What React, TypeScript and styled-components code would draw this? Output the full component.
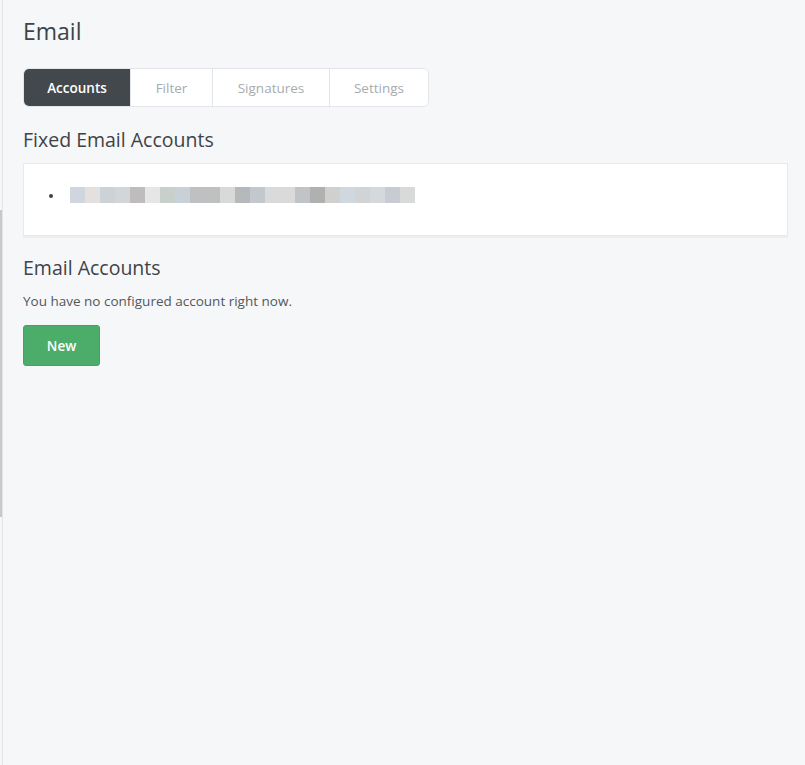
import styled, { createGlobalStyle } from "styled-components";

const GlobalStyle = createGlobalStyle`
  html, body {
    margin: 0;
    padding: 0;
    background: #f6f7f9;
  }
  body {
    font-family: "Open Sans", "Noto Sans", sans-serif;
    color: #3c4144;
  }
`;

const Page = styled.div`
  display: flex;
  min-height: 765px;
  background: #f6f7f9;
`;

const Edge = styled.div`
  width: 2px;
  border-right: 1px solid #e4e5e7;
  display: flex;
  flex-direction: column;
  padding-top: 210px;
`;

const EdgeThumb = styled.div`
  height: 307px;
  background: #c9c9c9;
`;

const Main = styled.main`
  flex: 1;
  padding: 14px 17px 0 20px;
`;

const Title = styled.h1`
  margin: 0 0 20px;
  font-size: 23px;
  font-weight: 400;
  line-height: 34px;
  color: #3e4347;
`;

const Tabs = styled.div`
  display: inline-flex;
  height: 39px;
  border: 1px solid #e3e5e8;
  border-radius: 6px;
  background: #fff;
  overflow: hidden;
  box-sizing: border-box;
`;

const Tab = styled.div<{ $active?: boolean; $w: number }>`
  width: ${(p) => p.$w}px;
  display: flex;
  align-items: center;
  justify-content: center;
  font-size: 13.5px;
  font-weight: ${(p) => (p.$active ? 600 : 400)};
  color: ${(p) => (p.$active ? "#ffffff" : "#a6abaf")};
  background: ${(p) => (p.$active ? "#43484c" : "#ffffff")};
  & + & {
    border-left: 1px solid #e3e5e8;
  }
`;

const Heading = styled.h2`
  margin: 0;
  font-size: 19.5px;
  font-weight: 400;
  line-height: 28px;
  color: #3e4347;
`;

const FixedHeading = styled(Heading)`
  margin-top: 19px;
  margin-bottom: 9px;
`;

const Panel = styled.div`
  background: #fff;
  border: 1px solid #e5eaea;
  box-shadow: 0 2px 0 #eceef0;
  padding: 23px 0 32px 0;
`;

const AccountList = styled.ul`
  margin: 0;
  padding-left: 40px;
  font-size: 14px;
  color: #3e4347;
`;

const AccountItem = styled.li`
  line-height: 16px;
  padding-left: 6px;
  &::marker {
    font-size: 12px;
  }
`;

const Pixels = styled.span`
  display: inline-flex;
  vertical-align: top;
  height: 16px;
`;

const Pixel = styled.span<{ $c: string }>`
  width: 15px;
  height: 16px;
  background: ${(p) => p.$c};
`;

const AccountsHeading = styled(Heading)`
  margin-top: 18px;
  margin-bottom: 9px;
`;

const Note = styled.p`
  margin: 0 0 14px;
  font-size: 13.5px;
  line-height: 20px;
  color: #51575b;
`;

const NewButton = styled.button`
  width: 77px;
  height: 41px;
  border: 1px solid #46a463;
  border-radius: 3px;
  background: #4cac6a;
  color: #fff;
  font-family: inherit;
  font-size: 13.5px;
  font-weight: 600;
  cursor: pointer;
`;

const blurred = [
  "#cfd6dd", "#e3e0de", "#cdd2d6", "#d3d6d9", "#bebcbd", "#e6e6e6",
  "#c9cfcb", "#c9d1d8", "#bfc0c1", "#bfc1c1", "#d8d9d9", "#b5b9bc",
  "#c2c8cd", "#d9dad9", "#d9dad9", "#c0c4c7", "#afb0b0", "#d0d0cf",
  "#cfd8df", "#d2d3d4", "#d6d9dc", "#c8cbd3", "#d8d9d9",
];

const tabs = [
  { label: "Accounts", width: 106, active: true },
  { label: "Filter", width: 81 },
  { label: "Signatures", width: 116 },
  { label: "Settings", width: 98 },
];

export default function App() {
  return (
    <Page>
      <GlobalStyle />
      <Edge>
        <EdgeThumb />
      </Edge>
      <Main>
        <Title>Email</Title>
        <Tabs>
          {tabs.map((t) => (
            <Tab key={t.label} $active={t.active} $w={t.width}>
              {t.label}
            </Tab>
          ))}
        </Tabs>

        <FixedHeading>Fixed Email Accounts</FixedHeading>
        <Panel>
          <AccountList>
            <AccountItem>
              <Pixels>
                {blurred.map((c, i) => (
                  <Pixel key={i} $c={c} />
                ))}
              </Pixels>
            </AccountItem>
          </AccountList>
        </Panel>

        <AccountsHeading>Email Accounts</AccountsHeading>
        <Note>You have no configured account right now.</Note>
        <NewButton>New</NewButton>
      </Main>
    </Page>
  );
}
